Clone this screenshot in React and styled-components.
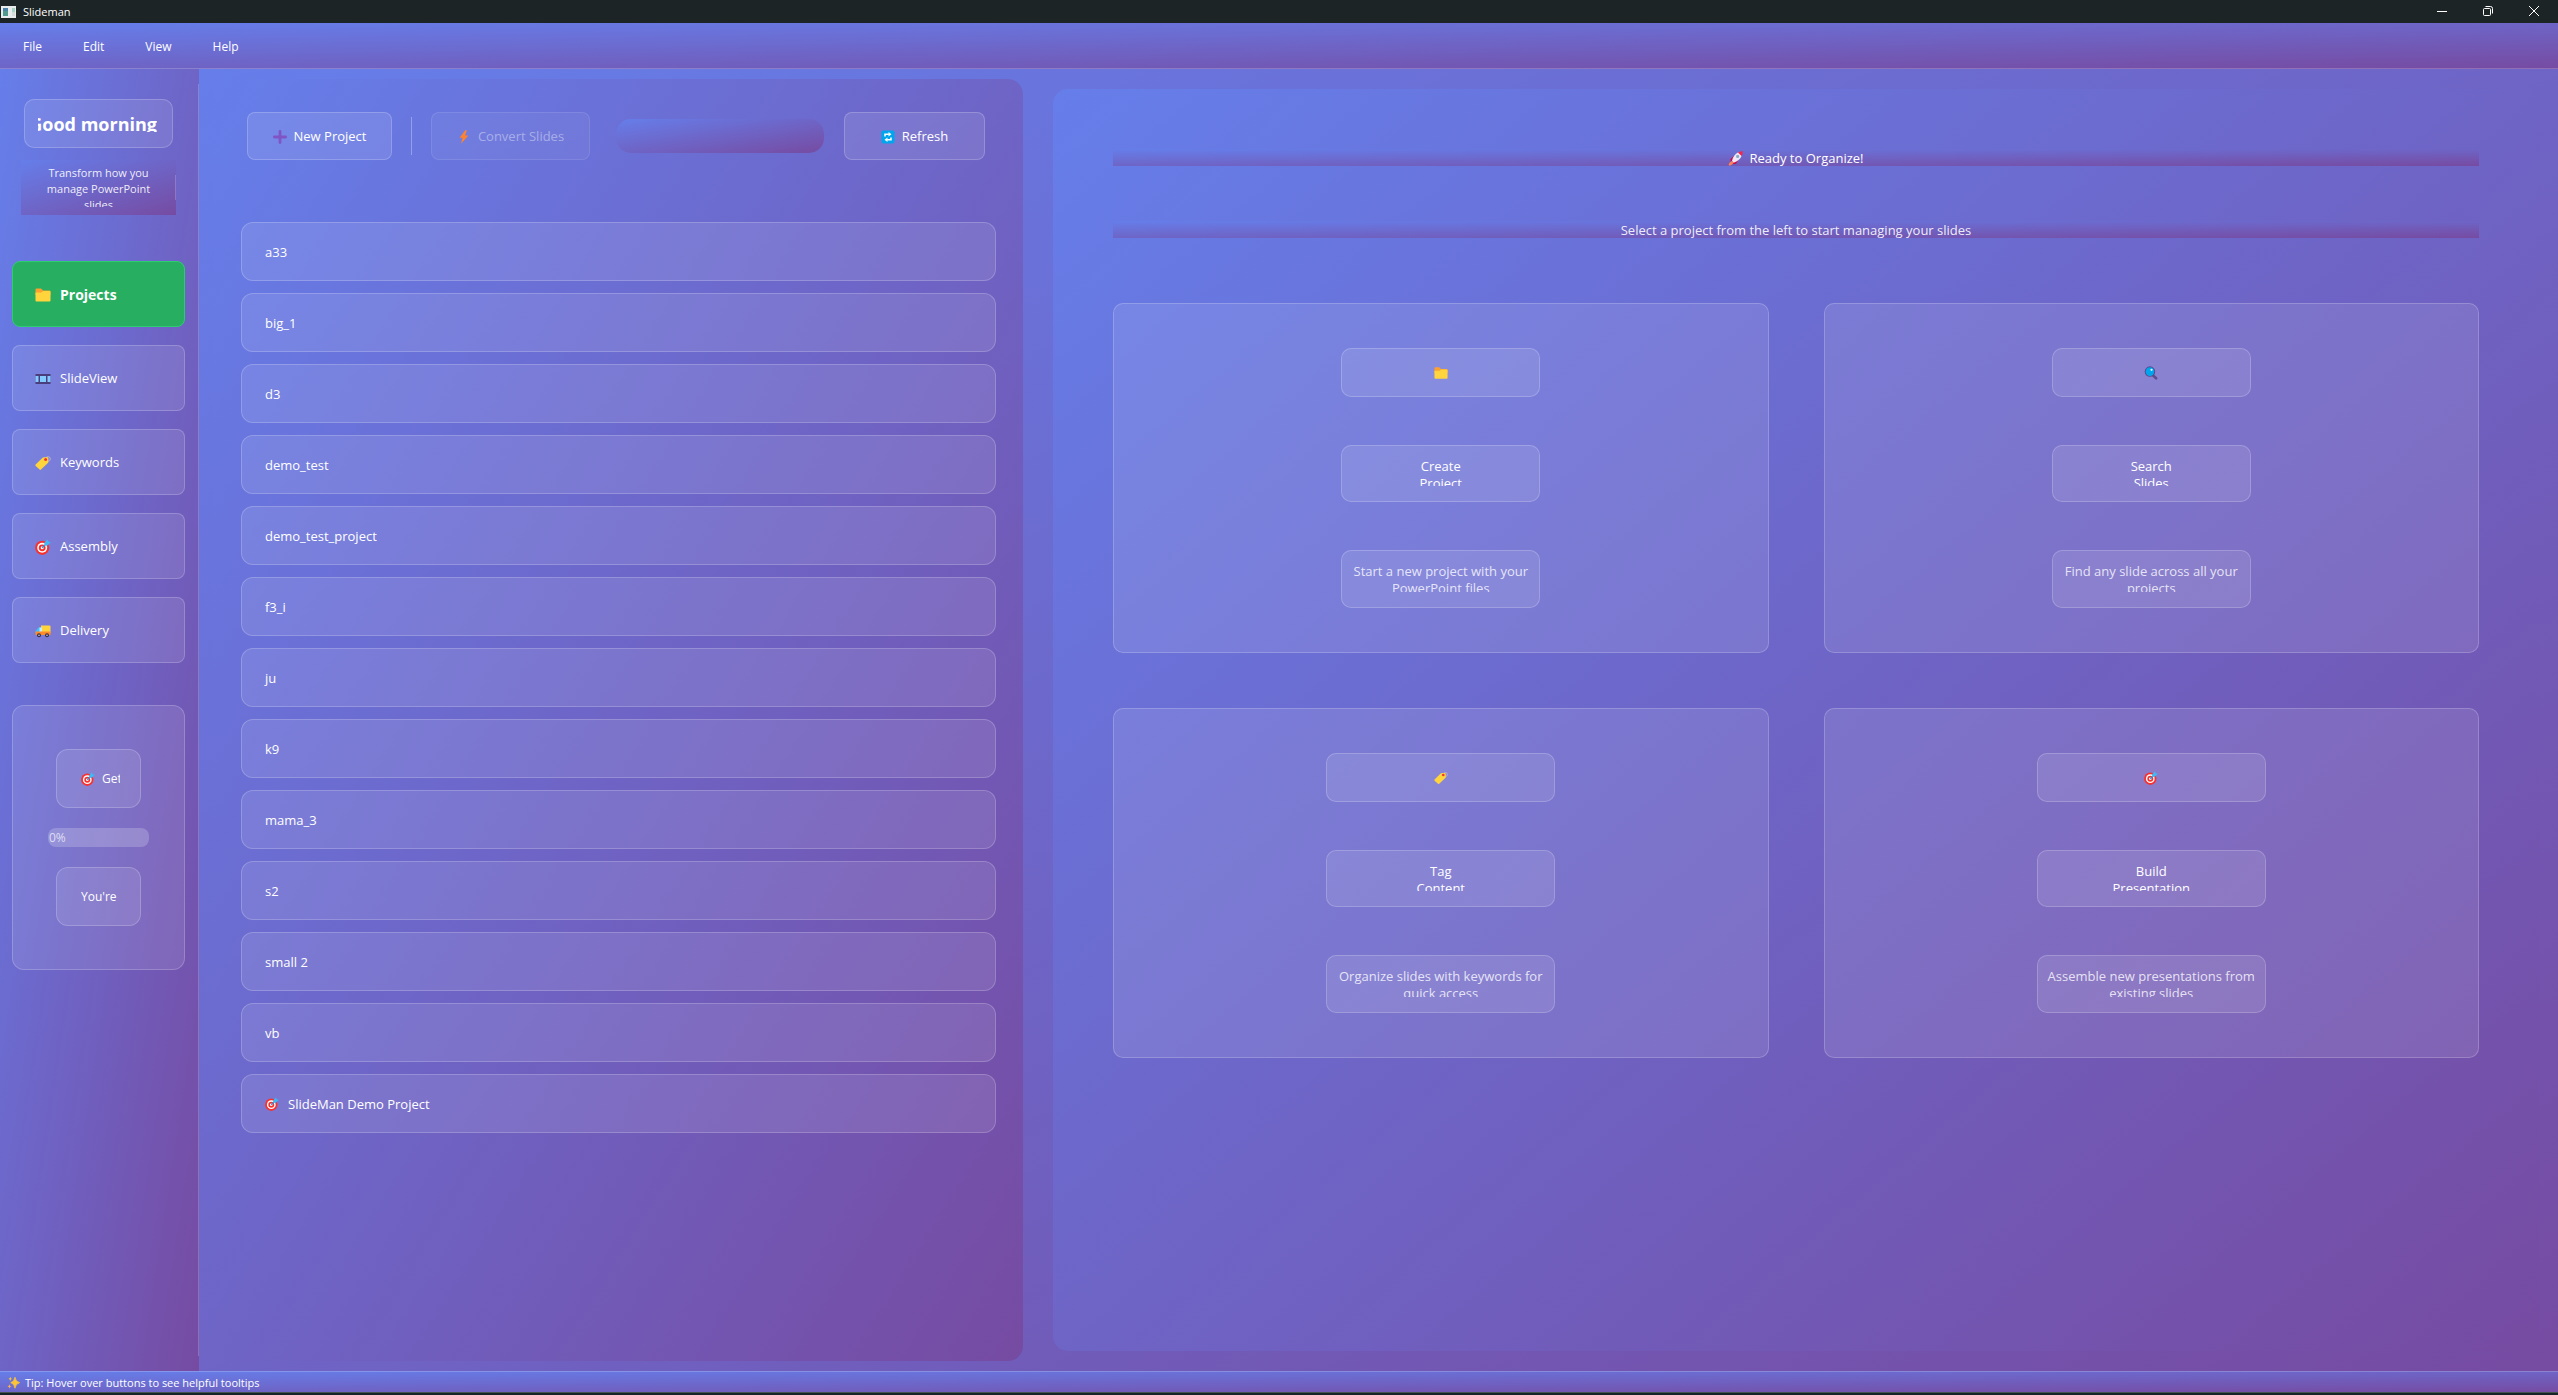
import React from "react";
import styled, { createGlobalStyle, css } from "styled-components";

const START = "#667eea";
const END = "#764ba2";
const brand = css`
  background-image: linear-gradient(to bottom right, ${START}, ${END});
`;
const glass = css`
  background-color: rgba(255, 255, 255, 0.1);
  border: 1px solid rgba(255, 255, 255, 0.2);
`;

const GlobalStyle = createGlobalStyle`
  *, *::before, *::after { box-sizing: border-box; }
  body { margin: 0; background: #152429; }
  body, button {
    font-family: "Open Sans", "Noto Sans", sans-serif;
    font-size: 13px;
    line-height: 17px;
    color: #fff;
  }
  button { margin: 0; cursor: pointer; }
  p, h1, h2, ul { margin: 0; padding: 0; font-weight: 400; font-size: 13px; }
  ul { list-style: none; }
`;

/* ---------- icons ---------- */

const Glyph = styled.svg.attrs({ viewBox: "0 0 16 16", "aria-hidden": true })`
  display: block;
  flex: none;
  width: ${(p) => p.$size || 14}px;
  height: ${(p) => p.$size || 14}px;
`;

const shapes = {
  folder: (
    <>
      <path d="M0.5 2.5Q0.5 1.5 1.5 1.5H6L8 3.5H14.5Q15.5 3.5 15.5 4.5V8H0.5Z" fill="#fca02f" />
      <path d="M0.5 5.5H6.5L8 4H14.5Q15.5 4 15.5 5V13.5Q15.5 14.5 14.5 14.5H1.5Q0.5 14.5 0.5 13.5Z" fill="#ffd43c" />
    </>
  ),
  film: (
    <>
      <rect x="0.5" y="3" width="15" height="10" fill="#4a3f7c" />
      <rect x="0.5" y="5" width="3" height="6" fill="#83cbff" />
      <rect x="5" y="5" width="6" height="6" fill="#83cbff" />
      <rect x="12.5" y="5" width="3" height="6" fill="#83cbff" />
    </>
  ),
  tag: (
    <>
      <circle cx="13" cy="4" r="2.3" fill="none" stroke="#b9aed0" strokeWidth="1" />
      <path d="M0.6 9.6L7.6 2.8Q8.2 2.3 9 2.3L12.4 2.3Q13.4 2.4 13.4 3.4V6.8Q13.4 7.6 12.9 8.1L6 14.6Q5.3 15.2 4.6 14.6L0.7 11Q0 10.3 0.6 9.6Z" fill="#ffd43c" />
      <circle cx="10.6" cy="4.6" r="1.5" fill="#f8312f" />
    </>
  ),
  target: (
    <>
      <circle cx="7.2" cy="8.8" r="7.1" fill="#f8312f" />
      <circle cx="7.2" cy="8.8" r="5" fill="#fff" />
      <circle cx="7.2" cy="8.8" r="3.4" fill="#f8312f" />
      <circle cx="7.2" cy="8.8" r="1.5" fill="#fff" />
      <path d="M7.2 8.8L12 4" stroke="#2f8fd8" strokeWidth="1.4" />
      <path d="M9.5 6.6V3.6L12.6 0.4L13.2 2.6L15.8 3.2L12.4 6.6Z" fill="#3fb8f5" />
    </>
  ),
  truck: (
    <>
      <path d="M6 2.5H14.5Q15.5 2.5 15.5 3.5V10H6Z" fill="#ffd43c" />
      <path d="M3.5 4.5H6.5V10H0.5V8Z" fill="#3fc1fb" />
      <path d="M4.5 4.5H7V10H4.5Z" fill="#cdeaf8" />
      <path d="M0.5 8.5H15.5V12H0.5Z" fill="#ff8a2a" />
      <circle cx="4" cy="12.3" r="2" fill="#36304a" />
      <circle cx="12" cy="12.3" r="2" fill="#36304a" />
      <circle cx="4" cy="12.3" r="0.8" fill="#d5d0e0" />
      <circle cx="12" cy="12.3" r="0.8" fill="#d5d0e0" />
    </>
  ),
  plus: (
    <path d="M8 1.6V14.4M1.6 8H14.4" stroke="#7f55c5" strokeWidth="3.2" strokeLinecap="round" />
  ),
  bolt: <path d="M9.4 0.3L3 8.8H6.4L4.6 15.8L13 6.2H9.2L11.4 0.3Z" fill="#ff822d" />,
  refresh: (
    <>
      <rect x="0.5" y="0.5" width="15" height="15" rx="2" fill="#00a6ed" />
      <path d="M4.6 7.4V4.9H9M11.4 8.6V11.1H7" fill="none" stroke="#fff" strokeWidth="1.8" />
      <path d="M8.6 2.4L12 4.9L8.6 7.4ZM7.4 8.6L4 11.1L7.4 13.6Z" fill="#fff" />
    </>
  ),
  rocket: (
    <>
      <path d="M2.6 8.6L6.6 5L7.6 9L11 9.4L8.6 13.6L6 13.8L3 11.2Z" fill="#ca0b4a" />
      <path d="M4.2 10.6Q5.6 4 11 1.4L14.6 5Q12.4 10.6 6 12.4Z" fill="#efe6f6" />
      <path d="M10.6 1.6Q13 0.2 15.8 0.2Q15.8 3 14.5 5.4Z" fill="#f0284f" />
      <circle cx="10.3" cy="5.8" r="1.7" fill="#8aa9c4" />
      <path d="M4.2 10.6L6 12.4L3.6 15Q2 15.8 0.8 15.4Q0.4 14 1.6 12.4Z" fill="#ff8157" />
    </>
  ),
  search: (
    <>
      <path d="M10 10.4L13.8 14" stroke="#5b4a8c" strokeWidth="3" strokeLinecap="round" />
      <circle cx="6.8" cy="6.4" r="6" fill="#554a8c" />
      <circle cx="6.8" cy="6.4" r="4.9" fill="#00a6ed" />
      <circle cx="8.6" cy="4.4" r="1.3" fill="#e4f5ff" />
    </>
  ),
  sparkles: (
    <>
      <path d="M9.8 1.5Q10.4 7 15.6 8.2Q10.4 9.4 9.8 15Q9.2 9.4 4.6 8.2Q9.2 7 9.8 1.5Z" fill="#fcc436" stroke="#fcc436" strokeWidth="1" />
      <path d="M4 0.8Q4.3 3 6.2 3.5Q4.3 4 4 6.2Q3.7 4 1.8 3.5Q3.7 3 4 0.8Z" fill="#fcc436" />
      <path d="M3 10Q3.3 12.2 5.4 12.7Q3.3 13.2 3 15.4Q2.7 13.2 0.6 12.7Q2.7 12.2 3 10Z" fill="#fcb050" />
    </>
  ),
};
const Icon = ({ name, size }) => <Glyph $size={size}>{shapes[name]}</Glyph>;

/* ---------- window frame ---------- */

const Window = styled.div`
  display: flex;
  flex-direction: column;
  min-height: 100vh;
`;
const TitleBar = styled.header`
  display: flex;
  align-items: center;
  gap: 7px;
  height: 23px;
  padding-left: 1px;
  background: #1c2426;
`;
const Title = styled.h1`
  flex: 1;
  && { font-size: 11px; }
`;
const WindowControls = styled.div`
  display: flex;
  padding-right: 1px;
`;
const WindowIcon = styled.svg`
  display: block;
  width: ${(p) => p.$w}px;
  height: 12px;
`;
const WindowButton = styled.button`
  display: flex;
  align-items: center;
  justify-content: center;
  width: 46px;
  height: 23px;
  padding: 0 0 2px;
  border: 0;
  background: none;
`;
const MenuBar = styled.nav`
  ${brand}
  display: flex;
  align-items: center;
  gap: 17px;
  height: 46px;
  padding: 2px 11px 0;
  border-bottom: 1px solid rgba(255, 255, 255, 0.2);
  background-origin: border-box;
`;
const MenuItem = styled.button`
  padding: 8px 12px;
  border: 0;
  background: none;
  font-size: 12px;
`;
const Body = styled.div`
  display: flex;
  flex: 1;
`;
const StatusBar = styled.footer`
  ${brand}
  display: flex;
  align-items: center;
  gap: 5px;
  height: 22px;
  padding: 1px 7px 0;
  margin-bottom: 2px;
  border-top: 1px solid rgba(255, 255, 255, 0.2);
  border-bottom: 1px solid #46524f;
  background-origin: border-box;
  font-size: 11px;
`;

/* ---------- sidebar ---------- */

const Sidebar = styled.aside`
  ${brand}
  flex: none;
  width: 199px;
  padding: 30px 13px 15px 12px;
  border-right: 1px solid transparent;
  background-origin: border-box;
  position: relative;
  &::after {
    content: "";
    position: absolute;
    top: 15px;
    right: -1px;
    bottom: 15px;
    width: 1px;
    background: rgba(255, 255, 255, 0.2);
  }
`;
const Greeting = styled.h2`
  ${glass}
  height: 49px;
  margin: 0 12px;
  padding: 15px 15px 15px 13px;
  border-radius: 10px;
`;
const GreetingText = styled.span`
  display: flex;
  align-items: center;
  justify-content: flex-end;
  height: 17px;
  overflow: hidden;
  font-size: 18px;
  line-height: 24px;
  font-weight: 700;
  white-space: nowrap;
`;
const Tagline = styled.div`
  ${brand}
  height: 55px;
  margin: 12px 9px 46px;
  padding: 5px 15px 9px;
  position: relative;
  &::after {
    content: "";
    position: absolute;
    top: 15px;
    right: 0;
    bottom: 15px;
    width: 1px;
    background: rgba(255, 255, 255, 0.2);
  }
`;
const TaglineText = styled.p`
  height: 42px;
  overflow: hidden;
  && { font-size: 11px; }
  line-height: 16px;
  text-align: center;
  white-space: nowrap;
  color: rgba(255, 255, 255, 0.9);
`;
const NavList = styled.nav`
  display: grid;
  gap: 18px;
`;
const NavButton = styled.button`
  ${glass}
  display: flex;
  align-items: center;
  gap: 9px;
  height: 66px;
  padding: 1px 22px 0;
  border-radius: 8px;
  ${(p) =>
    p.$active &&
    css`
      background-color: #27ae60;
      border-color: #2ecc71;
      font-size: 14px;
      font-weight: 700;
    `}
`;
const ProgressCard = styled.section`
  ${glass}
  display: flex;
  flex-direction: column;
  align-items: center;
  gap: 20px;
  margin-top: 42px;
  padding: 43px 0;
  border-radius: 12px;
`;
const StepTile = styled.div`
  ${glass}
  width: 85px;
  height: 59px;
  padding: 20px;
  border-radius: 12px;
`;
const StepText = styled.p`
  display: flex;
  align-items: center;
  gap: 7px;
  margin-left: 4px;
  overflow: hidden;
  white-space: nowrap;
  && { font-size: 12px; }
`;
const Meter = styled.div`
  width: 101px;
  height: 19px;
  padding-left: 1px;
  border-radius: 8px;
  background: rgba(255, 255, 255, 0.2);
  font-size: 12px;
  line-height: 19px;
  color: rgba(255, 255, 255, 0.7);
`;

/* ---------- main area ---------- */

const Main = styled.main`
  ${brand}
  flex: 1;
  display: grid;
  grid-template-columns: minmax(0, 809fr) minmax(0, 1485fr);
  gap: 30px;
  padding: 10px 20px 10px 15px;
`;
const ProjectsPanel = styled.section`
  ${brand}
  padding: 33px 27px;
  border-radius: 15px;
`;
const Toolbar = styled.div`
  display: flex;
  align-items: center;
  margin: 0 11px 62px 6px;
`;
const ToolButton = styled.button`
  ${glass}
  display: flex;
  align-items: center;
  justify-content: center;
  gap: 7px;
  width: ${(p) => p.$width}px;
  height: 48px;
  padding: 1px 0 0;
  border-radius: 8px;
  white-space: nowrap;
  &:disabled {
    background-color: rgba(255, 255, 255, 0.05);
    border-color: rgba(255, 255, 255, 0.1);
    color: rgba(255, 255, 255, 0.4);
  }
`;
const Divider = styled.span`
  width: 1px;
  height: 38px;
  margin: 0 19px;
  background: rgba(255, 255, 255, 0.3);
`;
const ToolStatus = styled.output`
  ${brand}
  flex: 1;
  height: 34px;
  margin: 0 20px 0 26px;
  border-radius: 15px;
`;
const ProjectList = styled.ul`
  display: grid;
  gap: 12px;
`;
const ProjectButton = styled.button`
  ${glass}
  display: flex;
  align-items: center;
  gap: 9px;
  width: 100%;
  height: 59px;
  padding: 1px 23px 0;
  border-radius: 12px;
`;
const WelcomePanel = styled.section`
  ${brand}
  margin: 10px 0;
  padding: 60px 59px 60px 60px;
  border-radius: 15px;
`;
const Banner = styled.p`
  ${brand}
  display: flex;
  align-items: center;
  justify-content: center;
  gap: 6px;
  height: 17px;
  padding-top: 1px;
  margin-bottom: ${(p) => p.$space}px;
  color: ${(p) => (p.$soft ? "rgba(255, 255, 255, 0.9)" : "#fff")};
`;
const CardGrid = styled.div`
  display: grid;
  grid-template-columns: 1fr 1fr;
  gap: 55px;
`;
const Card = styled.article`
  ${glass}
  display: flex;
  flex-direction: column;
  align-items: center;
  gap: 48px;
  padding: 44px 0;
  border-radius: 10px;
`;
const CardTile = styled.div`
  ${glass}
  display: flex;
  width: ${(p) => p.$width}px;
  height: ${(p) => p.$height}px;
  padding: 15px 8px;
  border-radius: 10px;
`;
const CardText = styled.div`
  display: flex;
  flex: 1;
  align-items: center;
  justify-content: center;
  padding-top: ${(p) => (p.$icon ? 0 : 2)}px;
  overflow: hidden;
  text-align: center;
  white-space: nowrap;
  color: ${(p) => (p.$soft ? "rgba(255, 255, 255, 0.8)" : "#fff")};
`;

const projects = [
  "a33", "big_1", "d3", "demo_test", "demo_test_project", "f3_i", "ju",
  "k9", "mama_3", "s2", "small 2", "vb",
];
const navItems = [
  ["folder", "Projects"],
  ["film", "SlideView"],
  ["tag", "Keywords"],
  ["target", "Assembly"],
  ["truck", "Delivery"],
];
const cards = [
  { icon: "folder", title: ["Create", "Project"], text: ["Start a new project with your", "PowerPoint files"], width: 199 },
  { icon: "search", title: ["Search", "Slides"], text: ["Find any slide across all your", "projects"], width: 199 },
  { icon: "tag", title: ["Tag", "Content"], text: ["Organize slides with keywords for", "quick access"], width: 229 },
  { icon: "target", title: ["Build", "Presentation"], text: ["Assemble new presentations from", "existing slides"], width: 229 },
];
const Lines = ({ lines }) => (
  <span>
    {lines[0]}
    <br />
    {lines[1]}
  </span>
);

export default function App() {
  return (
    <Window>
      <GlobalStyle />
      <TitleBar>
        <WindowIcon $w={15} viewBox="0 0 15 12" aria-hidden="true">
          <rect width="15" height="12" fill="#e9ecec" />
          <rect x="2" y="2" width="5" height="8" fill="#4f9a8c" />
          <rect x="2" y="2" width="5" height="3" fill="#4b82a8" />
          <rect x="11" y="2" width="3" height="4" fill="#a9d3c4" />
          <rect x="11" y="6" width="3" height="4" fill="#d5dcda" />
        </WindowIcon>
        <Title>Slideman</Title>
        <WindowControls>
          <WindowButton aria-label="Minimize">
            <WindowIcon $w={12} viewBox="0 0 12 12">
              <path d="M1 6.5H11" stroke="#fff" />
            </WindowIcon>
          </WindowButton>
          <WindowButton aria-label="Restore">
            <WindowIcon $w={12} viewBox="0 0 12 12">
              <rect x="1.5" y="3.5" width="7" height="7" rx="1" fill="none" stroke="#fff" />
              <path d="M3.5 1.5H8.5Q10.5 1.5 10.5 3.5V8.5" fill="none" stroke="#fff" />
            </WindowIcon>
          </WindowButton>
          <WindowButton aria-label="Close">
            <WindowIcon $w={12} viewBox="0 0 12 12">
              <path d="M1 1L11 11M11 1L1 11" stroke="#fff" />
            </WindowIcon>
          </WindowButton>
        </WindowControls>
      </TitleBar>
      <MenuBar aria-label="Menu">
        {["File", "Edit", "View", "Help"].map((m) => (
          <MenuItem key={m}>{m}</MenuItem>
        ))}
      </MenuBar>
      <Body>
        <Sidebar>
          <Greeting>
            <GreetingText>Good morning</GreetingText>
          </Greeting>
          <Tagline>
            <TaglineText>
              Transform how you
              <br />
              manage PowerPoint
              <br />
              slides
            </TaglineText>
          </Tagline>
          <NavList aria-label="Sections">
            {navItems.map(([icon, label], i) => (
              <NavButton key={label} $active={i === 0}>
                <Icon name={icon} size={16} />
                {label}
              </NavButton>
            ))}
          </NavList>
          <ProgressCard aria-label="Progress">
            <StepTile>
              <StepText>
                <Icon name="target" />
                Get
              </StepText>
            </StepTile>
            <Meter role="progressbar" aria-valuenow={0} aria-label="Setup progress">
              0%
            </Meter>
            <StepTile>
              <StepText>You're</StepText>
            </StepTile>
          </ProgressCard>
        </Sidebar>
        <Main>
          <ProjectsPanel aria-label="Projects">
            <Toolbar>
              <ToolButton $width={145}>
                <Icon name="plus" />
                New Project
              </ToolButton>
              <Divider />
              <ToolButton $width={159} disabled>
                <Icon name="bolt" />
                Convert Slides
              </ToolButton>
              <ToolStatus />
              <ToolButton $width={141}>
                <Icon name="refresh" />
                Refresh
              </ToolButton>
            </Toolbar>
            <ProjectList>
              {projects.map((name) => (
                <li key={name}>
                  <ProjectButton>{name}</ProjectButton>
                </li>
              ))}
              <li>
                <ProjectButton>
                  <Icon name="target" />
                  SlideMan Demo Project
                </ProjectButton>
              </li>
            </ProjectList>
          </ProjectsPanel>
          <WelcomePanel aria-label="Welcome">
            <Banner $space={55}>
              <Icon name="rocket" size={15} />
              Ready to Organize!
            </Banner>
            <Banner $space={65} $soft>
              Select a project from the left to start managing your slides
            </Banner>
            <CardGrid>
              {cards.map((c) => (
                <Card key={c.icon}>
                  <CardTile $width={c.width} $height={49}>
                    <CardText $icon>
                      <Icon name={c.icon} />
                    </CardText>
                  </CardTile>
                  <CardTile $width={c.width} $height={57}>
                    <CardText>
                      <Lines lines={c.title} />
                    </CardText>
                  </CardTile>
                  <CardTile $width={c.width} $height={58}>
                    <CardText $soft>
                      <Lines lines={c.text} />
                    </CardText>
                  </CardTile>
                </Card>
              ))}
            </CardGrid>
          </WelcomePanel>
        </Main>
      </Body>
      <StatusBar>
        <Icon name="sparkles" size={13} />
        Tip: Hover over buttons to see helpful tooltips
      </StatusBar>
    </Window>
  );
}
